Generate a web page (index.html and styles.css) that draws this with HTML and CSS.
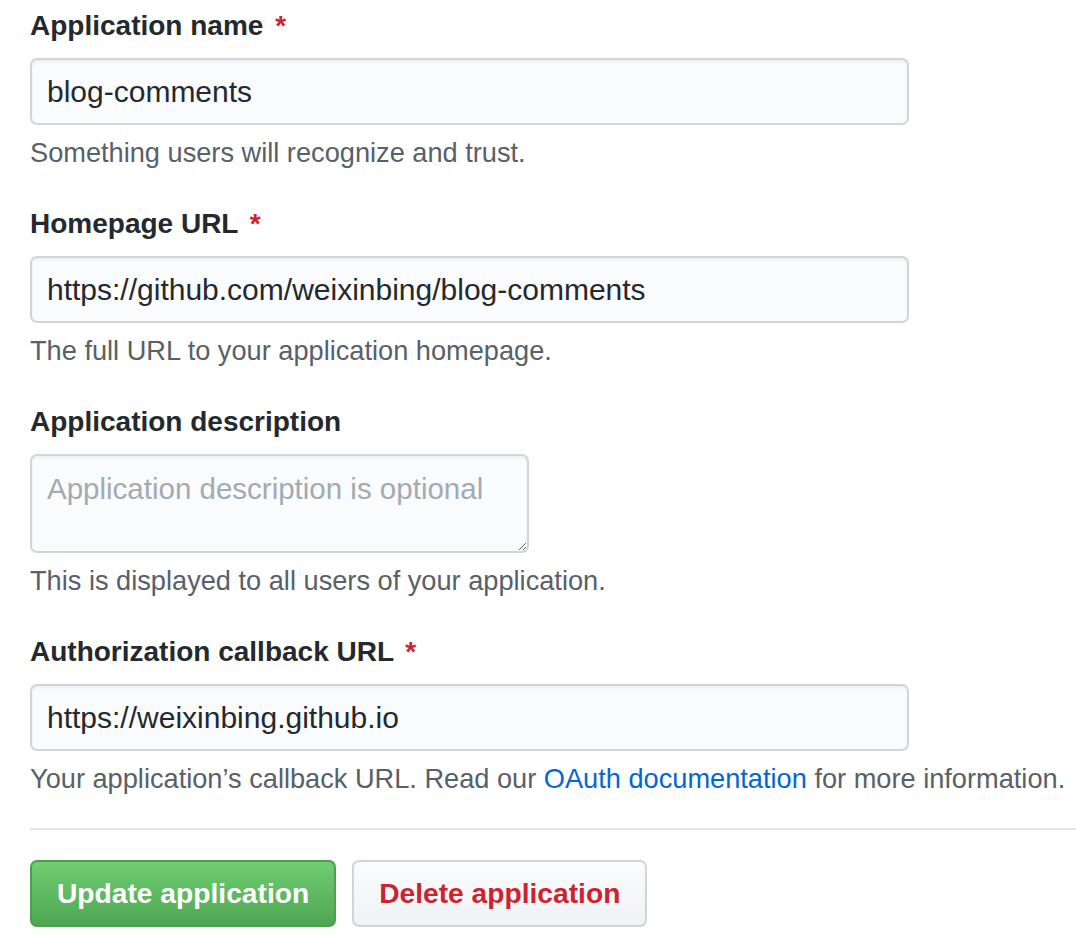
FILE: index.html
```html
<!DOCTYPE html>
<html>
<head>
<meta charset="utf-8">
<link rel="stylesheet" href="styles.css">
</head>
<body>
<form class="form">
  <div class="group">
    <label class="label">Application name <span class="req">*</span></label>
    <input class="input" type="text" value="blog-comments">
    <p class="note">Something users will recognize and trust.</p>
  </div>
  <div class="group">
    <label class="label">Homepage URL <span class="req">*</span></label>
    <input class="input" type="text" value="https://github.com/weixinbing/blog-comments">
    <p class="note">The full URL to your application homepage.</p>
  </div>
  <div class="group">
    <label class="label">Application description</label>
    <textarea class="textarea" placeholder="Application description is optional"></textarea>
    <p class="note">This is displayed to all users of your application.</p>
  </div>
  <div class="group">
    <label class="label">Authorization callback URL <span class="req">*</span></label>
    <input class="input" type="text" value="https://weixinbing.github.io">
    <p class="note">Your application’s callback URL. Read our <a class="link" href="#">OAuth documentation</a> for more information.</p>
  </div>
  <hr class="divider">
  <div class="actions">
    <button class="btn btn-primary" type="button">Update application</button>
    <button class="btn btn-danger" type="button">Delete application</button>
  </div>
</form>
</body>
</html>
```

FILE: styles.css
```css
html, body {
  margin: 0;
  padding: 0;
  background: #fff;
}
body {
  font-family: "Liberation Sans", Arial, sans-serif;
  color: #24292e;
}
.form {
  padding: 6px 0 0 30px;
}
.group {
  margin-bottom: 31px;
}
.label {
  display: block;
  font-size: 28px;
  font-weight: bold;
  line-height: 40px;
  margin-bottom: 12px;
}
.req {
  color: #cb2431;
  margin-left: 4px;
}
.input {
  display: block;
  box-sizing: border-box;
  width: 879px;
  height: 67px;
  padding: 0 15px;
  font-family: "Liberation Sans", Arial, sans-serif;
  font-size: 30px;
  color: #24292e;
  background: #fafbfc;
  border: 2px solid #d1d5da;
  border-radius: 7px;
  box-shadow: inset 0 2px 3px rgba(27,31,35,0.06);
  outline: none;
}
.textarea {
  display: block;
  box-sizing: border-box;
  width: 499px;
  height: 99px;
  padding: 13px 15px;
  font-family: "Liberation Sans", Arial, sans-serif;
  font-size: 29.5px;
  line-height: 40px;
  background: #fafbfc;
  border: 2px solid #d1d5da;
  border-radius: 7px;
  box-shadow: inset 0 2px 3px rgba(27,31,35,0.06);
  resize: vertical;
  outline: none;
}
.textarea::placeholder {
  color: #a3aab1;
}
.note {
  margin: 8px 0 0;
  font-size: 27.2px;
  line-height: 40px;
  color: #586069;
}
.link {
  color: #0366d6;
  text-decoration: none;
}
.divider {
  border: 0;
  border-top: 2px solid #e1e4e8;
  margin: -2px 0 30px;
  height: 0;
}
.actions {
  display: flex;
  gap: 16px;
}
.btn {
  box-sizing: border-box;
  height: 67px;
  padding: 0 25px;
  font-family: "Liberation Sans", Arial, sans-serif;
  font-size: 28.2px;
  font-weight: bold;
  border-radius: 7px;
  border: 2px solid;
  cursor: pointer;
}
.btn-primary {
  color: #fff;
  background: linear-gradient(180deg, #6fcd72, #4fa652);
  border-color: #4b9f4f;
}
.btn-danger {
  color: #cb2431;
  background: linear-gradient(180deg, #fafbfc, #f0f3f6);
  border-color: #d1d5da;
}
```
